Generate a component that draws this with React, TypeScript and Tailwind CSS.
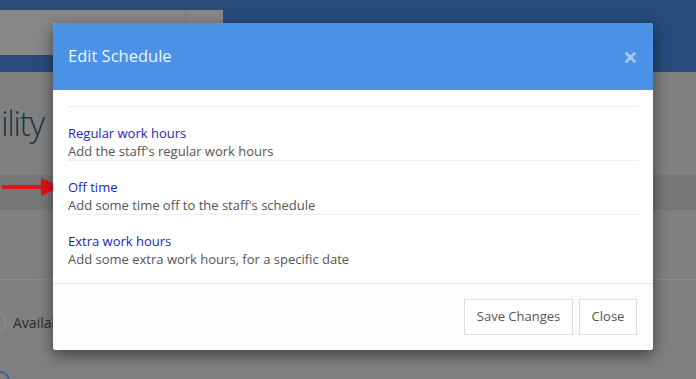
import React from "react";

const items = [
  { title: "Regular work hours", desc: "Add the staff's regular work hours" },
  { title: "Off time", desc: "Add some time off to the staff's schedule" },
  { title: "Extra work hours", desc: "Add some extra work hours, for a specific date" },
];

export default function App() {
  return (
    <div className="relative w-[696px] h-[379px] overflow-hidden bg-[#808080] font-['Open_Sans',sans-serif]">
      {/* page behind the overlay */}
      <div className="h-[72px] bg-[#274b7a] pt-[10px]">
        <div className="flex w-[223px] h-[45px] bg-[#878787]">
          <div className="w-[186px] border-r border-[#7a7a7a]" />
          <div className="flex-1" />
        </div>
      </div>
      <div className="h-[103px] pt-[29px] pl-[1px]">
        <span className="text-[34px] leading-[44px] tracking-[-1.5px] font-light text-[#1f3646] whitespace-nowrap">ility</span>
      </div>
      <div className="h-[35px] bg-[#777777]" />
      <div className="h-[70px] border-b border-[#8b8b8b]" />
      <div className="flex items-center h-[84px] -ml-[20px] gap-[7px]">
        <div className="w-[26px] h-[26px] rounded-full border border-[#939393]" />
        <span className="text-[14px] text-[#2b2b2b]">Available</span>
      </div>
      <div className="absolute -left-[10px] top-[371px] w-[20px] h-[20px] rounded-full border-2 border-[#3a5f9a]" />

      {/* red arrow */}
      <svg className="absolute left-0 top-[177px]" width="64" height="20" viewBox="0 0 64 20">
        <line x1="2" y1="10" x2="46" y2="10" stroke="#e3141b" strokeWidth="4" />
        <polygon points="41,1 62,10 41,19" fill="#e3141b" />
      </svg>

      {/* modal */}
      <div className="absolute left-[53px] top-[23px] w-[600px] rounded-[3px] overflow-hidden bg-white shadow-[0_5px_15px_rgba(0,0,0,0.5)]">
        <div className="h-[67px] bg-[#4a92e6] flex items-center justify-between pl-[15px] pr-[17px]">
          <span className="text-[16.5px] text-[#eef4fc]">Edit Schedule</span>
          <svg width="11" height="11" viewBox="0 0 11 11" className="mt-[2px]">
            <path d="M1.5 1.5 L9.5 9.5 M9.5 1.5 L1.5 9.5" stroke="#a8c9f2" strokeWidth="2.6" strokeLinecap="round" />
          </svg>
        </div>
        <div className="px-[15px] pt-[16px] pb-[15px]">
          {items.map((it) => (
            <div key={it.title} className="border-t border-[#eeeeee] pt-[17px] text-[13px] leading-[18px]">
              <div className="text-[#2424c4]">{it.title}</div>
              <div className="text-[#555555]">{it.desc}</div>
            </div>
          ))}
        </div>
        <div className="border-t border-[#e5e5e5] bg-[#fcfcfc] flex justify-end gap-[6px] pt-[15px] pb-[15px] pr-[16px]">
          <button className="h-[36px] w-[109px] border border-[#dddddd] bg-white text-[13px] text-[#555555]">
            Save Changes
          </button>
          <button className="h-[36px] w-[58px] border border-[#dddddd] bg-white text-[13px] text-[#555555]">
            Close
          </button>
        </div>
      </div>
    </div>
  );
}
